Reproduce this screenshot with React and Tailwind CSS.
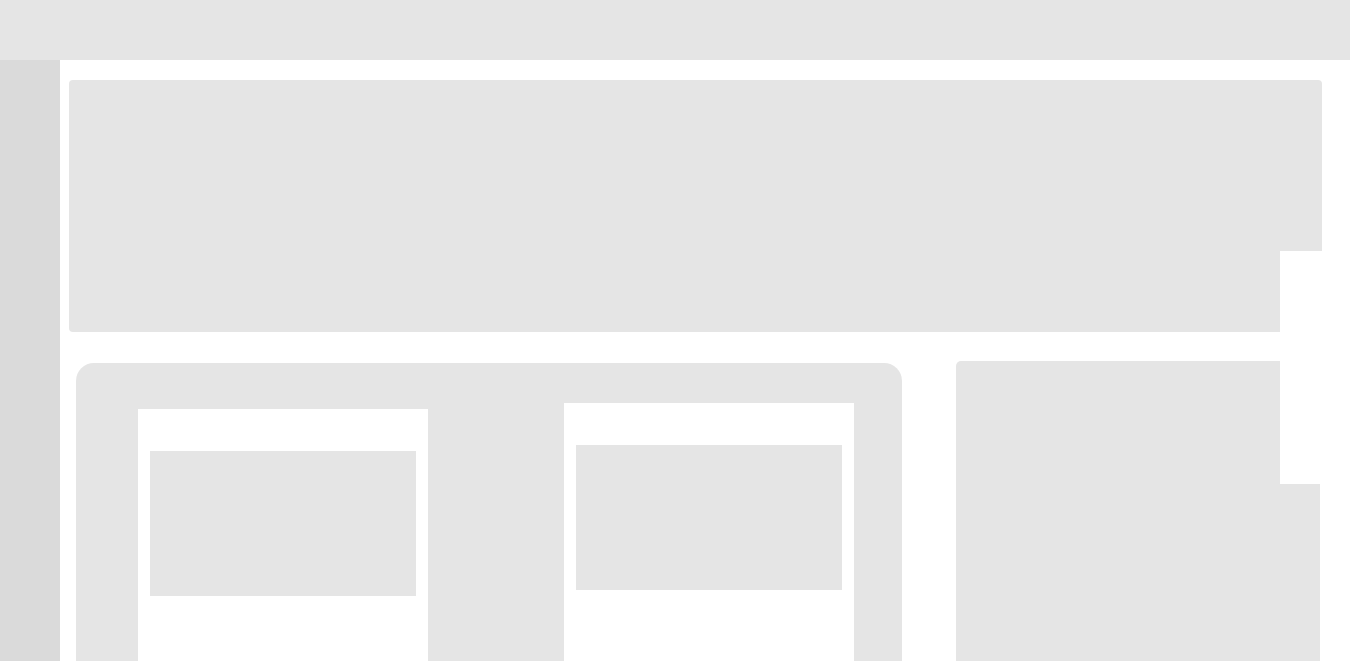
export default function App() {
  return (
    <div className="h-[661px] w-[1350px] overflow-hidden bg-white flex flex-col" style={{ fontFamily: '"Liberation Sans", sans-serif' }}>
      <div className="h-[60px] shrink-0 bg-[#e5e5e5]" />
      <div className="flex flex-1 min-h-0">
        <div className="w-[60px] shrink-0 bg-[#dadada]" />
        <div className="flex-1 pl-[9px] pt-[20px]">
          {/* top card */}
          <div className="flex flex-col">
            <div className="w-[1253px] h-[171px] bg-[#e5e5e5] rounded-t-[4px]" />
            <div className="w-[1211px] h-[81px] bg-[#e5e5e5] rounded-bl-[4px]" />
          </div>
          {/* second row */}
          <div className="mt-[29px] flex items-start pl-[7px]">
            <div className="mt-[2px] w-[826px] h-[400px] bg-[#e5e5e5] rounded-t-[18px] flex items-start pl-[62px] gap-[136px]">
              <div className="mt-[46px] w-[290px] h-[300px] bg-white px-[12px] pt-[42px]">
                <div className="h-[145px] bg-[#e5e5e5]" />
              </div>
              <div className="mt-[40px] w-[290px] h-[300px] bg-white px-[12px] pt-[42px]">
                <div className="h-[145px] bg-[#e5e5e5]" />
              </div>
            </div>
            <div className="ml-[54px] flex flex-col">
              <div className="w-[324px] h-[123px] bg-[#e5e5e5] rounded-tl-[5px]" />
              <div className="w-[364px] h-[300px] bg-[#e5e5e5]" />
            </div>
          </div>
        </div>
      </div>
    </div>
  );
}
